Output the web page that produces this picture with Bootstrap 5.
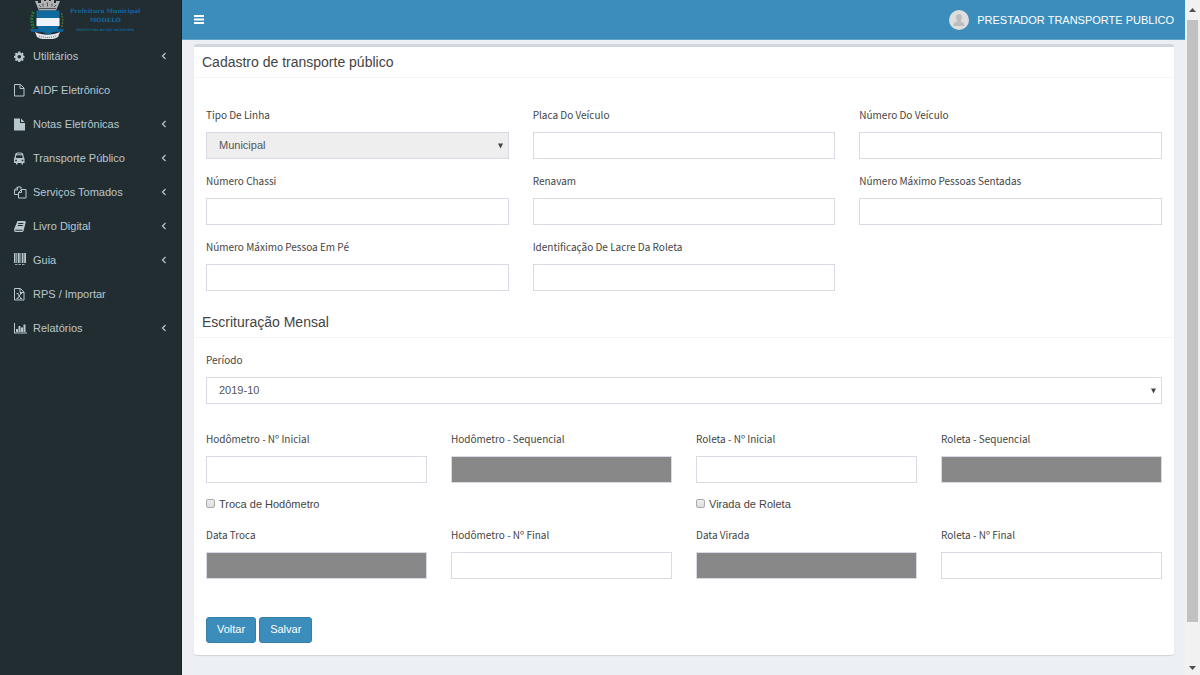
<!DOCTYPE html>
<html lang="pt-BR">
<head>
<meta charset="utf-8">
<meta name="viewport" content="width=device-width, initial-scale=1">
<title>Cadastro de transporte público</title>
<link href="https://cdn.jsdelivr.net/npm/bootstrap@5.3.0/dist/css/bootstrap.min.css" rel="stylesheet">
<style>
body{font-family:"Liberation Sans",Arial,sans-serif;font-size:11px;line-height:18px;color:#444;background:#ecf0f5}
.side{width:182px;background:#222d32;border-right:1px solid #1a2226}
.brand{height:39px;padding-left:30px}
.brand-name{font-family:"DejaVu Serif",serif;font-weight:700;font-size:6px;line-height:9px;color:#12699a;text-align:center;padding:6px 0 0 6px}
.brand-sub{font-size:3px;line-height:6px;padding-top:3px}
.side .nav-link{height:34px;padding:0 14px 0 13px;color:#b8c7ce}
.side .nav-link:hover{color:#fff}
.ico{width:14px;height:14px;margin-right:6px;fill:currentColor;flex:none}
.chev{width:6px;height:8px;fill:none;stroke:currentColor;stroke-width:1.2;margin-left:auto}
.topbar{height:40px;background:#3c8dbc;border-bottom:1px solid #5fa3cb;padding:0 11px 0 12px;color:#fff}
.topbar a,.topbar button{color:#fff}
.box{margin:4px 11px 20px 12px;background:#fff;border-top:3px solid #d2d6de;border-radius:3px;box-shadow:0 1px 1px rgba(0,0,0,.12)}
.box-title{font-size:14px;line-height:18px;padding:6px 8px;margin:0;border-bottom:1px solid #f4f4f4;color:#444;font-weight:400}
.field-label{display:block;font-family:"Noto Sans CJK JP",sans-serif;font-size:10px;line-height:16px;margin-bottom:9px;color:#444}
.box .form-control,.box .form-select{height:27px;font-size:11px;line-height:18px;padding:2px 12px 4px;border:1px solid #d8dbe4;border-radius:0;color:#555;background-color:#fff}
.box .form-select{padding-right:20px;background-image:url("data:image/svg+xml,%3Csvg xmlns='http://www.w3.org/2000/svg' viewBox='0 0 6 6'%3E%3Cpath d='M0 0h6L3 6z' fill='%23444'/%3E%3C/svg%3E");background-size:5px 6px;background-position:right 5px center}
.box .form-select:disabled{background-color:#eee;opacity:1}
.box .form-control:disabled{background-color:#888;opacity:1}
.fields{padding-top:29px;row-gap:14px}
.period{padding-top:14px}
.readings{padding-top:27px}
.checks{padding:12px 0 14px}
.tick{appearance:none;width:9px;height:9px;border:1px solid #aaa;border-radius:2px;background:linear-gradient(#eee,#ddd);margin:0 4px 2px 0}
.tick:checked{background:#3c8dbc}
.actions{padding:38px 12px 12px;gap:3px}
.box .btn-primary{--bs-btn-bg:#3c8dbc;--bs-btn-border-color:#367fa9;font-size:11px;line-height:18px;padding:2px 10px 4px;border-radius:3px}
.rail{width:15px;flex:none;background:#f1f1f1}
.rail-end{height:20px;flex:none}
.rail-foot{height:15px}
.rail-thumb{flex:602 0 0;background:#c1c1c1;margin:0 2px}
.rail-rest{flex:38 0 0}
.rail svg{width:7px;height:4px;fill:#505050}
</style>
</head>
<body>
<div class="d-flex min-vh-100">
<aside class="side flex-shrink-0">
  <a href="#" class="brand d-flex text-decoration-none">
    <svg width="34" height="39" viewBox="0 0 34 39" aria-hidden="true">
      <path d="M5 1h3v2h3V0h3v1h2V0h3v1h2V0h3v3h2V1h4l-2 5-2 4.500H9L7 6z" fill="#b0b2b3"/>
      <path d="M9 5l2 2M13 3.500v3M17.500 2.500v4M22 3.500v3M26 5l-2 2M9 8.500h17" stroke="#4c5255" fill="none"/>
      <path d="M3.500 12c-2.500 5-2 11 0 16" stroke="#1f7a3a" stroke-width="3" stroke-dasharray="2 1" fill="none"/>
      <path d="M31.500 13c1.500 5 1.500 10 0 15" stroke="#4b6a35" stroke-width="1.500" stroke-dasharray="2 1" fill="none"/>
      <path d="M0 29h34l-1.500 3H1.500z" fill="#0f5f93"/>
      <path d="M6.500 10.500h23V24c0 5-5 8-11.500 10.500C11.500 32 6.500 29 6.500 24z" fill="#0f6aa0"/>
      <path d="M6.500 18h23v8h-23z" fill="#eef3fb"/>
      <path d="M5 32c8 3.500 17 3.500 25 0l-2 5c-6 3.500-15 3.500-21 0z" fill="#dfe3ea"/>
      <path d="M9 36c5 2 12 2 17 0" stroke="#6b7075" stroke-dasharray="1 1" fill="none"/>
    </svg>
    <span class="brand-name"><span class="d-block">Prefeitura Municipal</span><span class="d-block">MODELO</span><span class="d-block brand-sub">PREFEITURA DO SEU MUNICIPIO</span></span>
  </a>
  <nav class="nav flex-column flex-nowrap" aria-label="Principal">
    <a class="nav-link d-flex align-items-center" href="#"><svg class="ico" viewBox="0 0 14 14"><path fill-rule="evenodd" d="M5.300 2.500h2l.3 1.400.8.3 1.100-.7 1.200 1.200-.7 1.100.3.800 1.200.3v1.800l-1.200.3-.3.800.7 1.100-1.200 1.200-1.100-.7-.8.3-.3 1.300h-2L5 11.700l-.8-.3-1.100.7-1.200-1.200.7-1.100-.3-.8L1 8.700V6.900l1.300-.3.3-.8-.7-1.100 1.200-1.200 1.100.7.8-.3zM6.300 6a1.800 1.800 0 100 3.600 1.800 1.800 0 000-3.600z"/></svg>Utilitários<svg class="chev" viewBox="0 0 6 8"><path d="M4.500 1L1.500 4l3 3"/></svg></a>
    <a class="nav-link d-flex align-items-center" href="#"><svg class="ico" viewBox="0 0 14 14"><path d="M1.500 1.500h6l3.500 3.500v8h-9.500zM7 1.500V5.500h4" fill="none" stroke="currentColor"/></svg>AIDF Eletrônico</a>
    <a class="nav-link d-flex align-items-center" href="#"><svg class="ico" viewBox="0 0 14 14"><path d="M1 1.500h6v4.500h5v7.500H1zM8 1.500L11.500 5H8z"/></svg>Notas Eletrônicas<svg class="chev" viewBox="0 0 6 8"><path d="M4.500 1L1.500 4l3 3"/></svg></a>
    <a class="nav-link d-flex align-items-center" href="#"><svg class="ico" viewBox="0 0 14 14"><path fill-rule="evenodd" d="M2.500 2.500C3 1 9.500 1 10 2.500l1 4 .5 1V12H10v1.500H8.500V12h-4v1.500H3V12H1V7.500l.5-1zM4 2.500v.8h4.500v-.8zM3.300 4.200L2.800 7h7l-.6-2.800zM2.200 8.700v1.500h1.600V8.700zm6.500 0v1.500h1.600V8.700z"/></svg>Transporte Público<svg class="chev" viewBox="0 0 6 8"><path d="M4.500 1L1.500 4l3 3"/></svg></a>
    <a class="nav-link d-flex align-items-center" href="#"><svg class="ico" viewBox="0 0 14 14"><path d="M5.500 9.500h-4V5L4.500 2h3.500v2.500M4.500 2v3h-3M5.500 7.500l3-3H13v8.500H5.500zM8.500 4.500v3h-3" fill="none" stroke="currentColor"/></svg>Serviços Tomados<svg class="chev" viewBox="0 0 6 8"><path d="M4.500 1L1.500 4l3 3"/></svg></a>
    <a class="nav-link d-flex align-items-center" href="#"><svg class="ico" viewBox="0 0 14 14"><path fill-rule="evenodd" d="M4.500 2H12l.8 1L10.500 12l-1 1H2l-1-1.500.3-2zM5.500 4l-.3 1h5l.3-1zM5 6l-.3 1h5l.2-1zM2.300 10.700v1h6.900l.4-1z"/></svg>Livro Digital<svg class="chev" viewBox="0 0 6 8"><path d="M4.500 1L1.500 4l3 3"/></svg></a>
    <a class="nav-link d-flex align-items-center" href="#"><svg class="ico" viewBox="0 0 14 14"><path d="M1 0h1.500v10H1zM3.200 0h.7v10h-.7zM4.700 0h2v10h-2zM7.500 0h.8v10h-.8zM9 0h1.500v10H9zM11.200 0H13v10h-1.800zM2 11h2.500v.8H2zM5.500 11H8v.8H5.500zM9 11h2.500v.8H9z"/></svg>Guia<svg class="chev" viewBox="0 0 6 8"><path d="M4.500 1L1.500 4l3 3"/></svg></a>
    <a class="nav-link d-flex align-items-center" href="#"><svg class="ico" viewBox="0 0 14 14"><path d="M1.500 1.500h6l3.500 3.500v8h-9.500zM7 1.500V5.500h4M4.500 6.500l3.500 5M8 6.500l-3.500 5M3.500 6.500h2M7 6.500h2M3.500 11.500h2M7 11.500h2" fill="none" stroke="currentColor"/></svg>RPS / Importar</a>
    <a class="nav-link d-flex align-items-center" href="#"><svg class="ico" viewBox="0 0 14 14"><path d="M1 2h1v9.500h12v1H1zM3 8h2v3H3zM5.500 5h2v6h-2zM8 6.500h2V11H8zM10.500 3.500h2V11h-2z"/></svg>Relatórios<svg class="chev" viewBox="0 0 6 8"><path d="M4.500 1L1.500 4l3 3"/></svg></a>
  </nav>
</aside>
<div class="flex-grow-1">
  <header class="topbar d-flex align-items-center justify-content-between">
    <button class="btn p-0 border-0 d-flex" type="button" aria-label="Alternar menu"><svg width="10" height="9" viewBox="0 0 10 9" fill="#fff"><path d="M0 0h10v2H0zM0 3.500h10v2H0zM0 7h10v2H0z"/></svg></button>
    <a href="#" class="d-flex align-items-center text-decoration-none gap-2"><svg width="20" height="20" viewBox="0 0 20 20" aria-hidden="true"><circle cx="10" cy="10" r="10" fill="#dedede"/><path d="M10 4c2.200 0 3 1.500 3 3.200 0 1.400-.5 2.300-1.200 3v1.300c2 .5 3.700 1 3.700 4.500h-11c0-3.500 1.700-4 3.700-4.500v-1.300C7.500 9.500 7 8.600 7 7.200 7 5.500 7.800 4 10 4z" fill="#bdbdbd"/></svg>PRESTADOR TRANSPORTE PUBLICO</a>
  </header>
  <main>
  <form class="box">
    <h1 class="box-title">Cadastro de transporte público</h1>
    <div class="row mx-0 gx-4 fields">
      <div class="col-4"><label class="field-label" for="linha">Tipo De Linha</label><select class="form-select" id="linha" disabled><option>Municipal</option></select></div>
      <div class="col-4"><label class="field-label" for="placa">Placa Do Veículo</label><input class="form-control" id="placa"></div>
      <div class="col-4"><label class="field-label" for="numero">Número Do Veículo</label><input class="form-control" id="numero"></div>
      <div class="col-4"><label class="field-label" for="chassi">Número Chassi</label><input class="form-control" id="chassi"></div>
      <div class="col-4"><label class="field-label" for="renavam">Renavam</label><input class="form-control" id="renavam"></div>
      <div class="col-4"><label class="field-label" for="sentadas">Número Máximo Pessoas Sentadas</label><input class="form-control" id="sentadas"></div>
      <div class="col-4"><label class="field-label" for="empe">Número Máximo Pessoa Em Pé</label><input class="form-control" id="empe"></div>
      <div class="col-4"><label class="field-label" for="lacre">Identificação De Lacre Da Roleta</label><input class="form-control" id="lacre"></div>
    </div>
    <h2 class="box-title mt-3">Escrituração Mensal</h2>
    <div class="row mx-0 gx-4 period">
      <div class="col-12"><label class="field-label" for="periodo">Período</label><select class="form-select" id="periodo"><option>2019-10</option></select></div>
    </div>
    <div class="row mx-0 gx-4 readings">
      <div class="col-3"><label class="field-label" for="hi">Hodômetro - Nº Inicial</label><input class="form-control" id="hi"></div>
      <div class="col-3"><label class="field-label" for="hs">Hodômetro - Sequencial</label><input class="form-control" id="hs" disabled></div>
      <div class="col-3"><label class="field-label" for="ri">Roleta - Nº Inicial</label><input class="form-control" id="ri"></div>
      <div class="col-3"><label class="field-label" for="rs">Roleta - Sequencial</label><input class="form-control" id="rs" disabled></div>
    </div>
    <div class="row mx-0 gx-4 checks">
      <div class="col-6 d-flex align-items-center"><input class="tick" type="checkbox" id="troca"><label for="troca">Troca de Hodômetro</label></div>
      <div class="col-6 d-flex align-items-center"><input class="tick" type="checkbox" id="virada"><label for="virada">Virada de Roleta</label></div>
    </div>
    <div class="row mx-0 gx-4">
      <div class="col-3"><label class="field-label" for="dt">Data Troca</label><input class="form-control" id="dt" disabled></div>
      <div class="col-3"><label class="field-label" for="hf">Hodômetro - Nº Final</label><input class="form-control" id="hf"></div>
      <div class="col-3"><label class="field-label" for="dv">Data Virada</label><input class="form-control" id="dv" disabled></div>
      <div class="col-3"><label class="field-label" for="rf">Roleta - Nº Final</label><input class="form-control" id="rf"></div>
    </div>
    <div class="actions d-flex">
      <button class="btn btn-primary" type="button">Voltar</button>
      <button class="btn btn-primary" type="submit">Salvar</button>
    </div>
  </form>
  </main>
</div>
<div class="rail d-flex flex-column vh-100 sticky-top" aria-hidden="true">
  <div class="rail-end d-flex align-items-center justify-content-center"><svg viewBox="0 0 7 4"><path d="M0 4l3.500-4L7 4z"/></svg></div>
  <div class="rail-thumb"></div>
  <div class="rail-rest"></div>
  <div class="rail-end rail-foot d-flex align-items-center justify-content-center"><svg viewBox="0 0 7 4"><path d="M0 0l3.500 4L7 0z"/></svg></div>
</div>
</div>
<script src="https://cdn.jsdelivr.net/npm/bootstrap@5.3.0/dist/js/bootstrap.bundle.min.js"></script>
</body>
</html>
